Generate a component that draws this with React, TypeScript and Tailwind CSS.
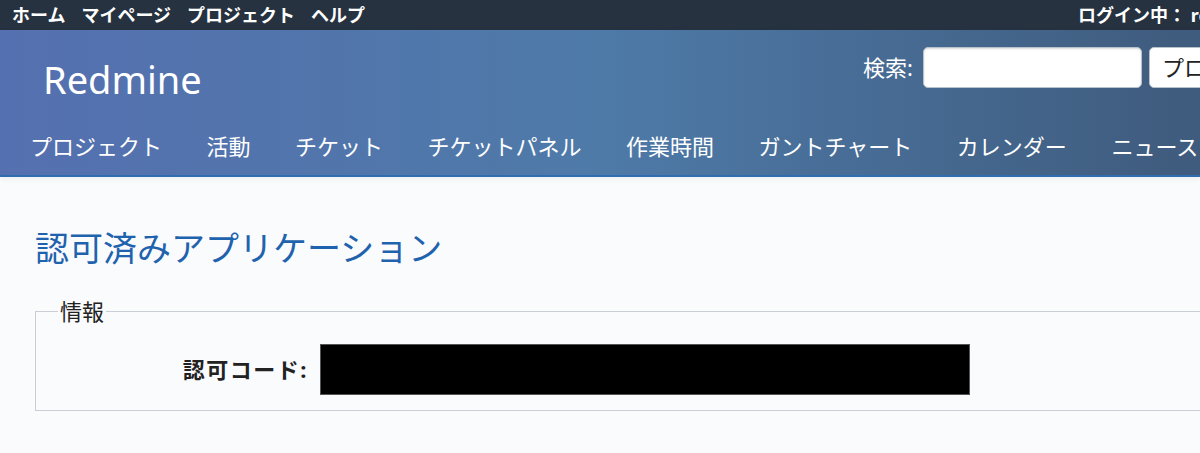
import React from 'react';

const menu = ['プロジェクト', '活動', 'チケット', 'チケットパネル', '作業時間', 'ガントチャート', 'カレンダー', 'ニュース', '文書', 'Wiki'];

export default function App() {
  return (
    <div className="w-full min-h-[453px] overflow-hidden bg-[#fafbfd] font-['Noto_Sans','Noto_Sans_CJK_JP',sans-serif]">
      {/* top menu */}
      <div className="h-[30px] bg-[#26323f] flex items-center whitespace-nowrap text-white text-[18px] font-bold">
        <div className="flex shrink-0 gap-4 pl-[12px]">
          <span>ホーム</span>
          <span>マイページ</span>
          <span>プロジェクト</span>
          <span>ヘルプ</span>
        </div>
        <span className="shrink-0 ml-[713px]">ログイン中：&nbsp;redmine</span>
      </div>

      {/* header */}
      <div className="h-[147px] bg-[linear-gradient(90deg,#5570b0_0%,#4e7aa8_50%,#3f5b7d_100%)] border-b-2 border-[#2f6cb0] shadow-[0_2px_6px_rgba(0,0,0,0.06)] flex flex-col whitespace-nowrap">
        <div className="flex h-[101px]">
          <div className="w-[863px] shrink-0 pl-[43px] pt-[23px]">
            <h1 className="text-white text-[38px] leading-[1.4]">Redmine</h1>
          </div>
          <div className="flex shrink-0 items-center h-[41px] mt-[17px]">
            <label className="text-white text-[22px] mr-[10px]">検索:</label>
            <div className="w-[219px] h-[41px] bg-white rounded-[5px] border border-[#b8c2cc] shadow-[inset_0_1px_2px_rgba(0,0,0,0.15)]" />
            <div className="ml-[7px] w-[200px] h-[41px] bg-white rounded-[5px] border border-[#b8c2cc] flex items-center pl-[12px] text-[22px] text-[#222]">
              プロジェクトへ移動...
            </div>
          </div>
        </div>
        <div className="flex gap-[44.5px] pl-[30px] text-white text-[22px] leading-[30px]">
          {menu.map((m) => (
            <span key={m} className="shrink-0">{m}</span>
          ))}
        </div>
      </div>

      {/* content */}
      <div className="pl-[35px] pt-[50px] whitespace-nowrap">
        <h2 className="text-[#1f62ad] text-[34px] leading-[42px]">認可済みアプリケーション</h2>
        <fieldset className="mt-[29px] w-[1300px] border border-[#c9ced6] px-[22px] pb-[15px] pt-[20px]">
          <legend className="px-[2px] text-[22px] text-[#222] leading-[26px]">情報</legend>
          <div className="flex items-center">
            <div className="w-[250px] text-right font-bold text-[22px] tracking-[1.5px] text-[#222]">認可コード:</div>
            <div className="ml-[12px] w-[650px] h-[51px] bg-black border border-[#555]" />
          </div>
        </fieldset>
      </div>
    </div>
  );
}
